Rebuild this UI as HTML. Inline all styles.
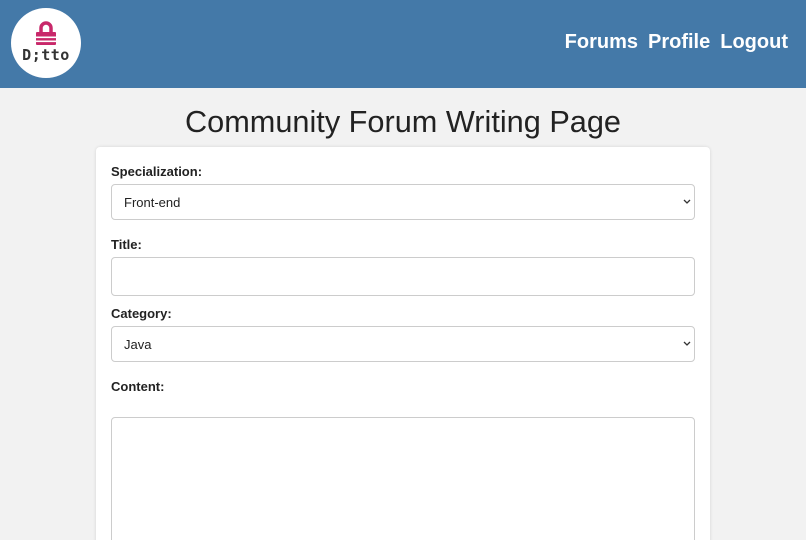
<!DOCTYPE html>
<html style="overflow:hidden;width:806px;height:540px"><head><style>
body{margin:0;width:806px;height:540px;overflow:hidden;background:#f2f2f2;font-family:"Liberation Sans",Arial,sans-serif;position:relative}
.hdr{position:absolute;left:0;top:0;width:806px;height:88px;background:#4479a8}
.logo{position:absolute;left:11px;top:8px;width:70px;height:70px;border-radius:50%;background:#fff}
.nav{position:absolute;top:31px;right:18px;color:#fff;font-weight:bold;font-size:20px}
.nav span{margin-left:10px}
h1{position:absolute;top:104px;left:0;width:806px;text-align:center;margin:0;font-weight:normal;font-size:30.7px;color:#222}
.card{position:absolute;left:96px;top:147px;width:614px;height:400px;background:#fff;border-radius:4px;box-shadow:0 0 3px rgba(0,0,0,.12)}
.lbl{position:absolute;left:111px;font-size:13px;font-weight:bold;color:#222}
.box{position:absolute;left:111px;width:582px;border:1px solid #ccc;border-radius:4px;background:#fff;font-size:13px;color:#222}
.box .t{position:absolute;left:12px;top:10px}
.box .c{position:absolute;right:6px;top:9px}
</style></head><body>
<div class="hdr"></div>
<div class="logo">
<svg width="70" height="70" viewBox="0 0 70 70">
<path d="M30 25 v-5 a5 5 0 0 1 10 0 v5" fill="none" stroke="#c8286a" stroke-width="3.5"/>
<rect x="25" y="24" width="20" height="13" rx="1" fill="#c8286a"/>
<rect x="25" y="28.5" width="20" height="1.6" fill="#fff"/>
<rect x="25" y="32.5" width="20" height="1.6" fill="#fff"/>
<text x="35" y="52" text-anchor="middle" font-family="DejaVu Sans Mono,monospace" font-weight="bold" font-size="15" fill="#333" letter-spacing="0.5">D;tto</text>
</svg></div>
<div class="nav"><span>Forums</span><span>Profile</span><span>Logout</span></div>
<h1>Community Forum Writing Page</h1>
<div class="card"></div>
<div class="lbl" style="top:164px">Specialization:</div>
<div class="box" style="top:184px;height:34px"><span class="t">Front-end</span><svg class="c" width="8" height="14" viewBox="0 0 8 14" style="position:absolute;right:3px;top:10px"><path d="M1 5 L4 8 L7 5" fill="none" stroke="#333" stroke-width="1.3"/></svg></div>
<div class="lbl" style="top:237px">Title:</div>
<div class="box" style="top:257px;height:37px"></div>
<div class="lbl" style="top:306px">Category:</div>
<div class="box" style="top:326px;height:34px"><span class="t">Java</span><svg width="8" height="14" viewBox="0 0 8 14" style="position:absolute;right:3px;top:10px"><path d="M1 5 L4 8 L7 5" fill="none" stroke="#333" stroke-width="1.3"/></svg></div>
<div class="lbl" style="top:379px">Content:</div>
<div class="box" style="top:417px;height:130px"></div>
</body></html>
